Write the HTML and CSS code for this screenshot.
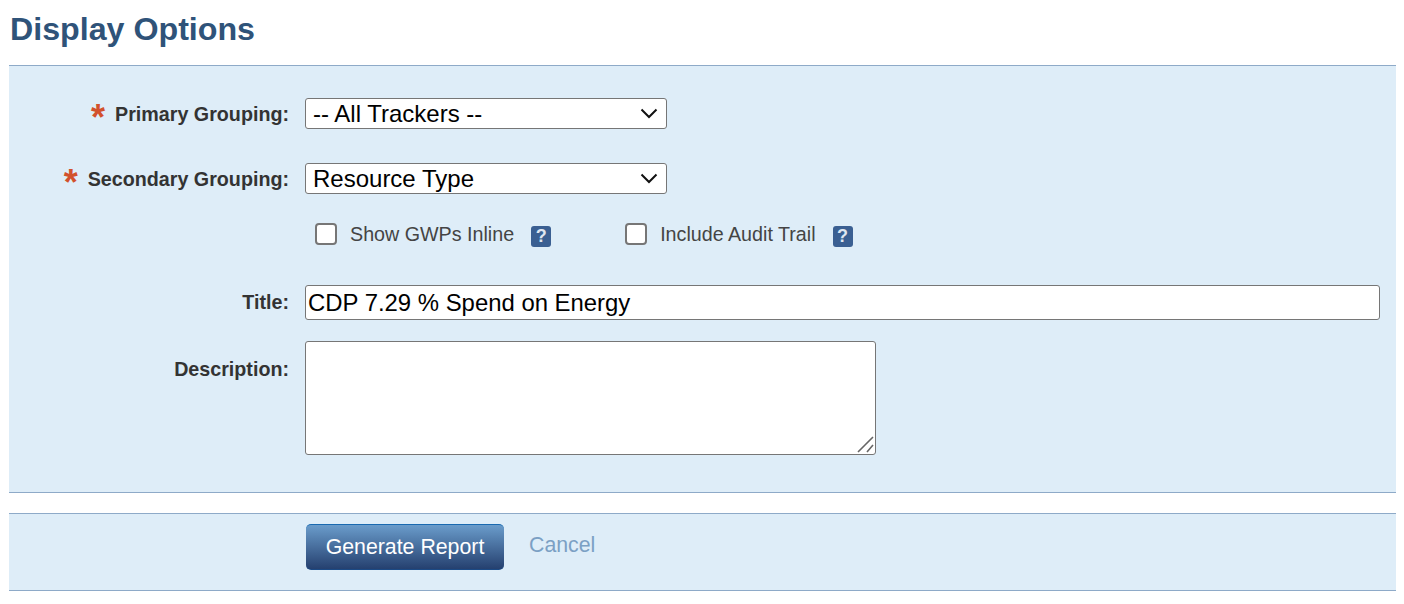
FILE: index.html
```html
<!DOCTYPE html>
<html lang="en">
<head>
<meta charset="utf-8">
<title>Display Options</title>
<link rel="stylesheet" href="styles.css">
</head>
<body>
<h1 class="title">Display Options</h1>
<form class="panel form-panel">
  <div class="row row-primary">
    <label class="label"><span class="req">*</span>Primary Grouping:</label>
    <div class="select-wrap">
      <select class="select"><option>-- All Trackers --</option></select>
      <svg class="chevron" width="18" height="11" viewBox="0 0 18 11"><path d="M1.5 1.5 L9 9 L16.5 1.5" fill="none" stroke="#111" stroke-width="2"/></svg>
    </div>
  </div>
  <div class="row row-secondary">
    <label class="label"><span class="req">*</span>Secondary Grouping:</label>
    <div class="select-wrap">
      <select class="select"><option>Resource Type</option></select>
      <svg class="chevron" width="18" height="11" viewBox="0 0 18 11"><path d="M1.5 1.5 L9 9 L16.5 1.5" fill="none" stroke="#111" stroke-width="2"/></svg>
    </div>
  </div>
  <div class="row row-checks">
    <div class="label"></div>
    <div class="checks">
      <label class="check check-first"><input type="checkbox" class="box"><span>Show GWPs Inline</span><span class="help">?</span></label>
      <label class="check"><input type="checkbox" class="box"><span>Include Audit Trail</span><span class="help">?</span></label>
    </div>
  </div>
  <div class="row row-title">
    <label class="label">Title:</label>
    <input class="text" type="text" value="CDP 7.29 % Spend on Energy">
  </div>
  <div class="row row-desc">
    <label class="label">Description:</label>
    <div class="area-wrap">
      <textarea class="area"></textarea>
      <svg class="grip" width="17" height="17" viewBox="0 0 17 17"><path d="M1 16 L16 1 M10 16 L16 9" fill="none" stroke="#666" stroke-width="1.6"/></svg>
    </div>
  </div>
</form>
<div class="panel actions">
  <button type="button" class="primary">Generate Report</button>
  <a class="cancel">Cancel</a>
</div>
</body>
</html>
```
FILE: styles.css
```css
html, body { margin: 0; padding: 0; background: #fff; }
body { font-family: "Liberation Sans", Arial, sans-serif; color: #333; padding: 0 8px 0 9px; height: 604px; box-sizing: border-box; overflow: hidden; }
.title { margin: 0; padding: 11px 0 0 1px; height: 65px; box-sizing: border-box; font-size: 32.2px; line-height: 37px; font-weight: bold; color: #2f5379; }
.panel { background: #deedf8; border-top: 1px solid #8eaac8; border-bottom: 1px solid #8eaac8; }
.form-panel { height: 428px; box-sizing: border-box; padding-top: 32px; }
.row { display: flex; align-items: flex-start; }
.label { flex: none; width: 280px; margin-right: 16px; text-align: right; font-size: 19.7px; font-weight: bold; line-height: 33px; color: #333; }
.req { color: #d2512c; font-size: 36px; line-height: 0; margin-right: 10px; vertical-align: -9px; font-weight: bold; }
.select-wrap { position: relative; width: 362px; height: 31px; }
.select { appearance: none; display: block; width: 362px; height: 31px; box-sizing: border-box; background: #fff; border: 1px solid #767676; border-radius: 3px; font: 24px "Liberation Sans", Arial, sans-serif; color: #000; padding: 0 30px 0 7px; }
.chevron { position: absolute; right: 9px; top: 10px; pointer-events: none; }
.row-secondary { margin-top: 32px; }
.row-checks { margin-top: 25px; height: 35px; }
.checks { display: flex; padding-left: 10px; }
.check { display: flex; align-items: center; font-size: 19.7px; color: #444; height: 26px; }
.check-first { margin-right: 74px; }
.box { appearance: none; margin: 0 13px 0 0; width: 22px; height: 22px; box-sizing: border-box; background: #fff; border: 2px solid #767676; border-radius: 4px; }
.help { display: inline-block; margin-left: 17px; width: 20px; height: 21px; background: #3a5f92; border-radius: 3px; color: #dfe6f0; font-size: 18px; font-weight: bold; line-height: 21px; text-align: center; margin-top: 4px; }
.row-title { margin-top: 29px; }
.row-title .label { line-height: 34px; }
.text { flex: none; width: 1075px; height: 35px; box-sizing: border-box; background: #fff; border: 1px solid #767676; border-radius: 3px; font: 23.9px "Liberation Sans", Arial, sans-serif; color: #000; padding: 0 2px; }
.row-desc { margin-top: 21px; }
.area-wrap { position: relative; width: 571px; height: 114px; }
.area { display: block; width: 571px; height: 114px; box-sizing: border-box; background: #fff; border: 1px solid #767676; border-radius: 3px; margin: 0; resize: none; }
.grip { position: absolute; right: 2px; bottom: 2px; pointer-events: none; }
.row-desc .label { line-height: 57px; }
.actions { margin-top: 20px; height: 78px; box-sizing: border-box; padding: 10px 0 0 297px; display: flex; align-items: flex-start; }
.primary { width: 198px; height: 46px; border: 0; border-top: 1px solid #1a6ab0; border-bottom: 1px solid #1c4a85; border-radius: 5px; background: linear-gradient(#6a9ccb, #25406f); color: #fff; font: 21.3px "Liberation Sans", Arial, sans-serif; padding: 0; }
.cancel { margin-left: 25px; font-size: 21.3px; line-height: 42px; color: #7ba0c4; }
```
